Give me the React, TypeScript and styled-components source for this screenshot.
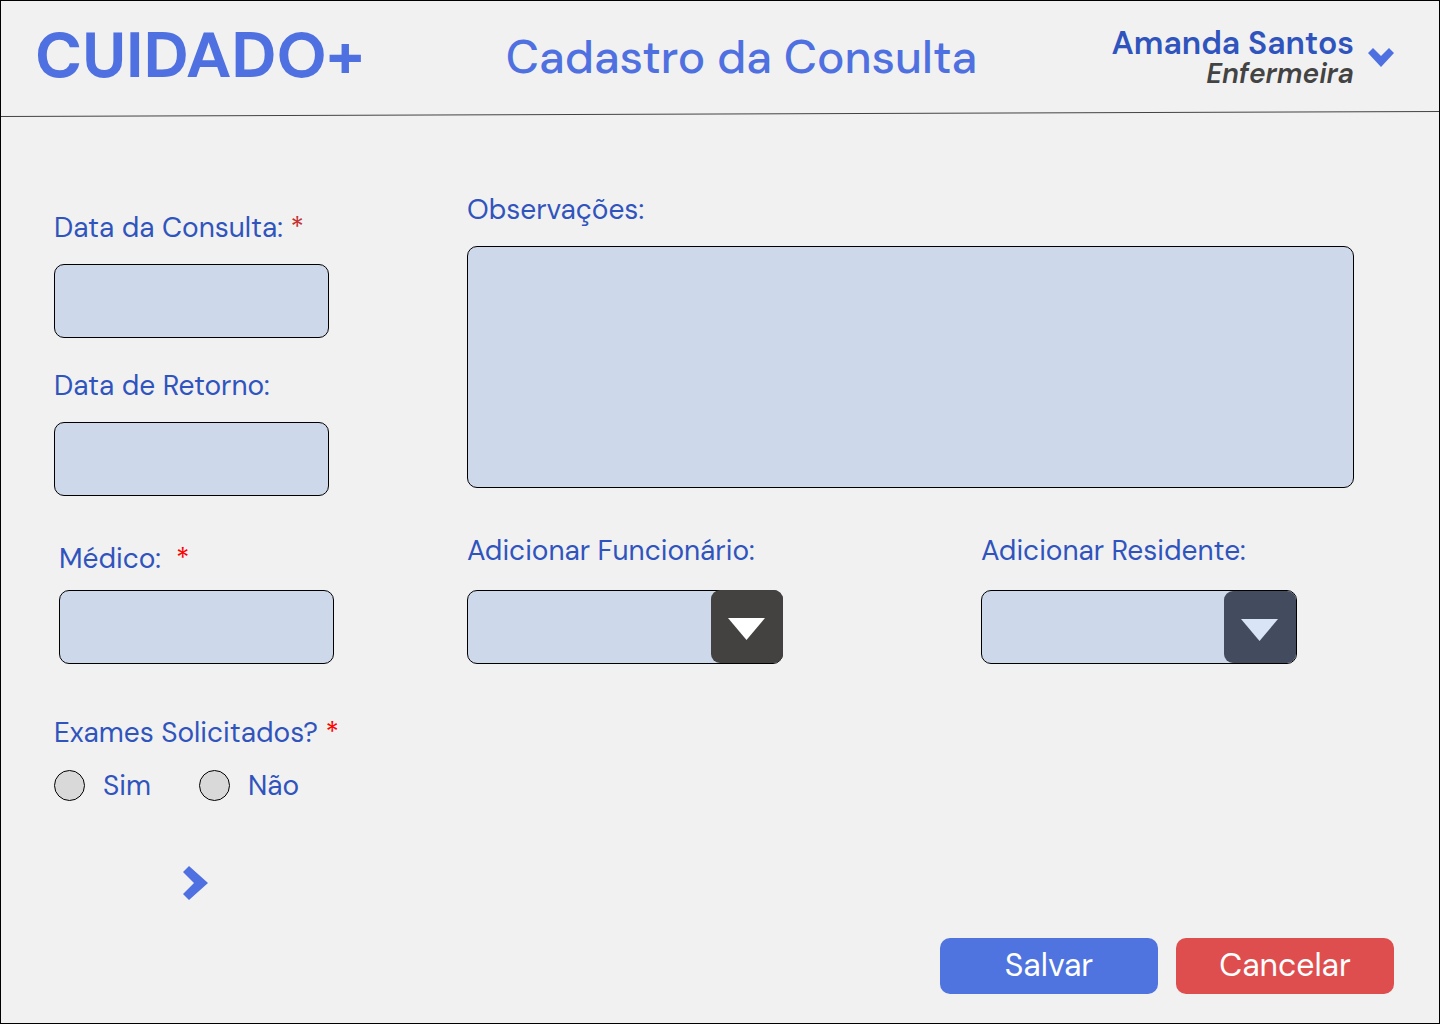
import React from "react";
import styled, { createGlobalStyle } from "styled-components";

const color = {
  page: "#f1f1f1",
  brand: "#4f70e0",
  text: "#3054bd",
  field: "#cdd8ea",
  line: "#000000",
  role: "#434343",
};

const GlobalStyle = createGlobalStyle`
  *, *::before, *::after { box-sizing: border-box; }
  body { margin: 0; background: ${color.page}; }
  body, button, input, select, textarea {
    font-family: "DM Sans", Inter, "Liberation Sans", sans-serif;
  }
`;

const Page = styled.div`
  display: flex;
  flex-direction: column;
  min-height: 100vh;
  border: 1px solid ${color.line};
  background: ${color.page};
  color: ${color.text};
`;

const Header = styled.header`
  display: grid;
  grid-template-columns: 471fr 471fr 417fr;
  align-items: center;
  height: 110px;
  padding: 0 45px 0 34px;
`;

const Logo = styled.span`
  padding-bottom: 2px;
  font-size: 64px;
  line-height: 108px;
  font-weight: 700;
  color: ${color.brand};
  white-space: nowrap;
`;

const Title = styled.h1`
  margin: 0;
  font-size: 46px;
  line-height: 112px;
  font-weight: 500;
  color: ${color.brand};
  white-space: nowrap;
`;

const UserMenu = styled.button`
  display: flex;
  align-items: center;
  justify-content: flex-end;
  gap: 14px;
  padding: 0;
  border: 0;
  background: none;
  text-align: right;
  cursor: pointer;
`;

const UserText = styled.span`
  display: flex;
  flex-direction: column;
`;

const UserName = styled.span`
  font-size: 32px;
  line-height: 34px;
  font-weight: 600;
  color: ${color.text};
  white-space: nowrap;
`;

const UserRole = styled.span`
  font-size: 28px;
  line-height: 28px;
  font-weight: 600;
  font-style: italic;
  color: ${color.role};
`;

const Divider = styled.svg`
  display: block;
  width: 100%;
  height: 6px;
`;

const Form = styled.form`
  display: flex;
  flex: 1;
  flex-direction: column;
  padding-top: 75px;
`;

const Fields = styled.div`
  display: flex;
  flex-direction: column;
  padding: 0 85px 0 53px;
`;

const TopRow = styled.div`
  display: grid;
  grid-template-columns: 413fr 887fr;
`;

const DateColumn = styled.div`
  display: flex;
  flex-direction: column;
  gap: 30px;
  padding-top: 18px;
`;

const PeopleRow = styled.div`
  display: grid;
  grid-template-columns: 413fr 514fr 373fr;
  align-items: end;
  margin-top: 37px;
`;

const Field = styled.div<{ $gap?: number; $inset?: number }>`
  display: flex;
  flex-direction: column;
  gap: ${(p) => p.$gap ?? 18}px;
  padding-left: ${(p) => p.$inset ?? 0}px;
`;

const Label = styled.label`
  font-size: 28px;
  line-height: 36px;
  white-space: pre;
`;

const Required = styled.span<{ $muted?: boolean }>`
  color: ${(p) => (p.$muted ? "#c53030" : "#ff0000")};
`;

const TextInput = styled.input`
  width: 275px;
  height: 74px;
  padding: 0 16px;
  border: 1px solid ${color.line};
  border-radius: 10px;
  background: ${color.field};
  color: ${color.text};
  font-size: 28px;
`;

const TextArea = styled.textarea`
  display: block;
  width: 100%;
  height: 242px;
  padding: 16px;
  border: 1px solid ${color.line};
  border-radius: 10px;
  background: ${color.field};
  color: ${color.text};
  font-size: 28px;
  resize: none;
`;

const SelectBox = styled.div`
  display: grid;
  width: 316px;
`;

const Select = styled.select`
  grid-area: 1 / 1;
  height: 74px;
  padding: 0 88px 0 16px;
  border: 1px solid ${color.line};
  border-radius: 10px;
  background: ${color.field};
  color: ${color.text};
  font-size: 28px;
  appearance: none;
`;

const SelectCap = styled.span<{ $framed?: boolean }>`
  grid-area: 1 / 1;
  justify-self: end;
  display: flex;
  align-items: center;
  justify-content: center;
  width: 72px;
  height: ${(p) => (p.$framed ? 72 : 73)}px;
  margin: ${(p) => (p.$framed ? "1px 1px 0 0" : "0")};
  padding: ${(p) => (p.$framed ? 6 : 5)}px 1px 0 0;
  border-radius: 9px;
  background: ${(p) => (p.$framed ? "#434b5e" : "#434240")};
  color: ${(p) => (p.$framed ? "#d9e4f7" : "#ffffff")};
  pointer-events: none;
`;

const Exams = styled.fieldset`
  margin: 51px 0 0;
  padding: 0;
  border: 0;
`;

const Legend = styled.legend`
  padding: 0;
  font-size: 28px;
  line-height: 36px;
`;

const Options = styled.div`
  display: flex;
  gap: 48px;
  padding-top: 17px;
`;

const Option = styled.label`
  display: flex;
  align-items: flex-start;
  gap: 18px;
  font-size: 28px;
  line-height: 36px;
`;

const Radio = styled.input`
  width: 31px;
  height: 31px;
  margin: 2px 0 0;
  border: 1px solid ${color.line};
  border-radius: 50%;
  background: #d9d9d9;
  appearance: none;

  &:checked {
    box-shadow: inset 0 0 0 7px #d9d9d9;
    background: ${color.brand};
  }
`;

const NextButton = styled.button`
  display: flex;
  align-self: flex-start;
  margin: 62px 0 0 129px;
  padding: 0;
  border: 0;
  background: none;
  cursor: pointer;
`;

const Actions = styled.div`
  display: flex;
  justify-content: flex-end;
  gap: 18px;
  margin-top: auto;
  padding: 38px 45px 29px;
`;

const ActionButton = styled.button<{ $danger?: boolean }>`
  width: 218px;
  height: 56px;
  padding: 0 0 2px;
  border: 0;
  border-radius: 10px;
  background: ${(p) => (p.$danger ? "#df4e4e" : "#4f74df")};
  color: #ffffff;
  font-size: 32px;
  line-height: 54px;
  cursor: pointer;
`;

function Triangle() {
  return (
    <svg width="37" height="22" viewBox="0 0 37 22" aria-hidden="true">
      <path d="M0 0H37L18.500 22Z" fill="currentColor" />
    </svg>
  );
}

function PersonSelect({ id, label, framed }: { id: string; label: string; framed?: boolean }) {
  return (
    <Field $gap={21}>
      <Label htmlFor={id}>{label}</Label>
      <SelectBox>
        <Select id={id} defaultValue="">
          <option value=""></option>
        </Select>
        <SelectCap $framed={framed}>
          <Triangle />
        </SelectCap>
      </SelectBox>
    </Field>
  );
}

export default function App() {
  return (
    <Page>
      <GlobalStyle />
      <Header>
        <Logo>CUIDADO+</Logo>
        <Title>Cadastro da Consulta</Title>
        <UserMenu type="button">
          <UserText>
            <UserName>Amanda Santos</UserName>
            <UserRole>Enfermeira</UserRole>
          </UserText>
          <svg width="26" height="19" viewBox="0 0 26 19" aria-hidden="true">
            <path d="M0 5L5 0L13 8L21 0L26 5L13 19Z" fill={color.brand} />
          </svg>
        </UserMenu>
      </Header>
      <Divider viewBox="0 0 1438 6" preserveAspectRatio="none" aria-hidden="true">
        <line x1="0" y1="5.5" x2="1438" y2="0.5" stroke="#434343" />
      </Divider>

      <Form onSubmit={(e) => e.preventDefault()}>
        <Fields>
          <TopRow>
            <DateColumn>
              <Field>
                <Label htmlFor="data-consulta">
                  Data da Consulta: <Required $muted>*</Required>
                </Label>
                <TextInput id="data-consulta" required />
              </Field>
              <Field>
                <Label htmlFor="data-retorno">Data de Retorno:</Label>
                <TextInput id="data-retorno" />
              </Field>
            </DateColumn>
            <Field>
              <Label htmlFor="observacoes">Observações:</Label>
              <TextArea id="observacoes" />
            </Field>
          </TopRow>

          <PeopleRow>
            <Field $gap={13} $inset={5}>
              <Label htmlFor="medico">
                {"Médico:  "}
                <Required>*</Required>
              </Label>
              <TextInput id="medico" required />
            </Field>
            <PersonSelect id="funcionario" label="Adicionar Funcionário:" />
            <PersonSelect id="residente" label="Adicionar Residente:" framed />
          </PeopleRow>

          <Exams>
            <Legend>
              Exames Solicitados? <Required>*</Required>
            </Legend>
            <Options>
              <Option>
                <Radio type="radio" name="exames" value="sim" />
                Sim
              </Option>
              <Option>
                <Radio type="radio" name="exames" value="nao" />
                Não
              </Option>
            </Options>
          </Exams>

          <NextButton type="button" aria-label="Avançar">
            <svg width="25" height="34" viewBox="0 0 25 34" aria-hidden="true">
              <path d="M0 6L6 0L25 17L6 34L0 28L11 17Z" fill={color.brand} />
            </svg>
          </NextButton>
        </Fields>

        <Actions>
          <ActionButton type="submit">Salvar</ActionButton>
          <ActionButton type="button" $danger>
            Cancelar
          </ActionButton>
        </Actions>
      </Form>
    </Page>
  );
}
